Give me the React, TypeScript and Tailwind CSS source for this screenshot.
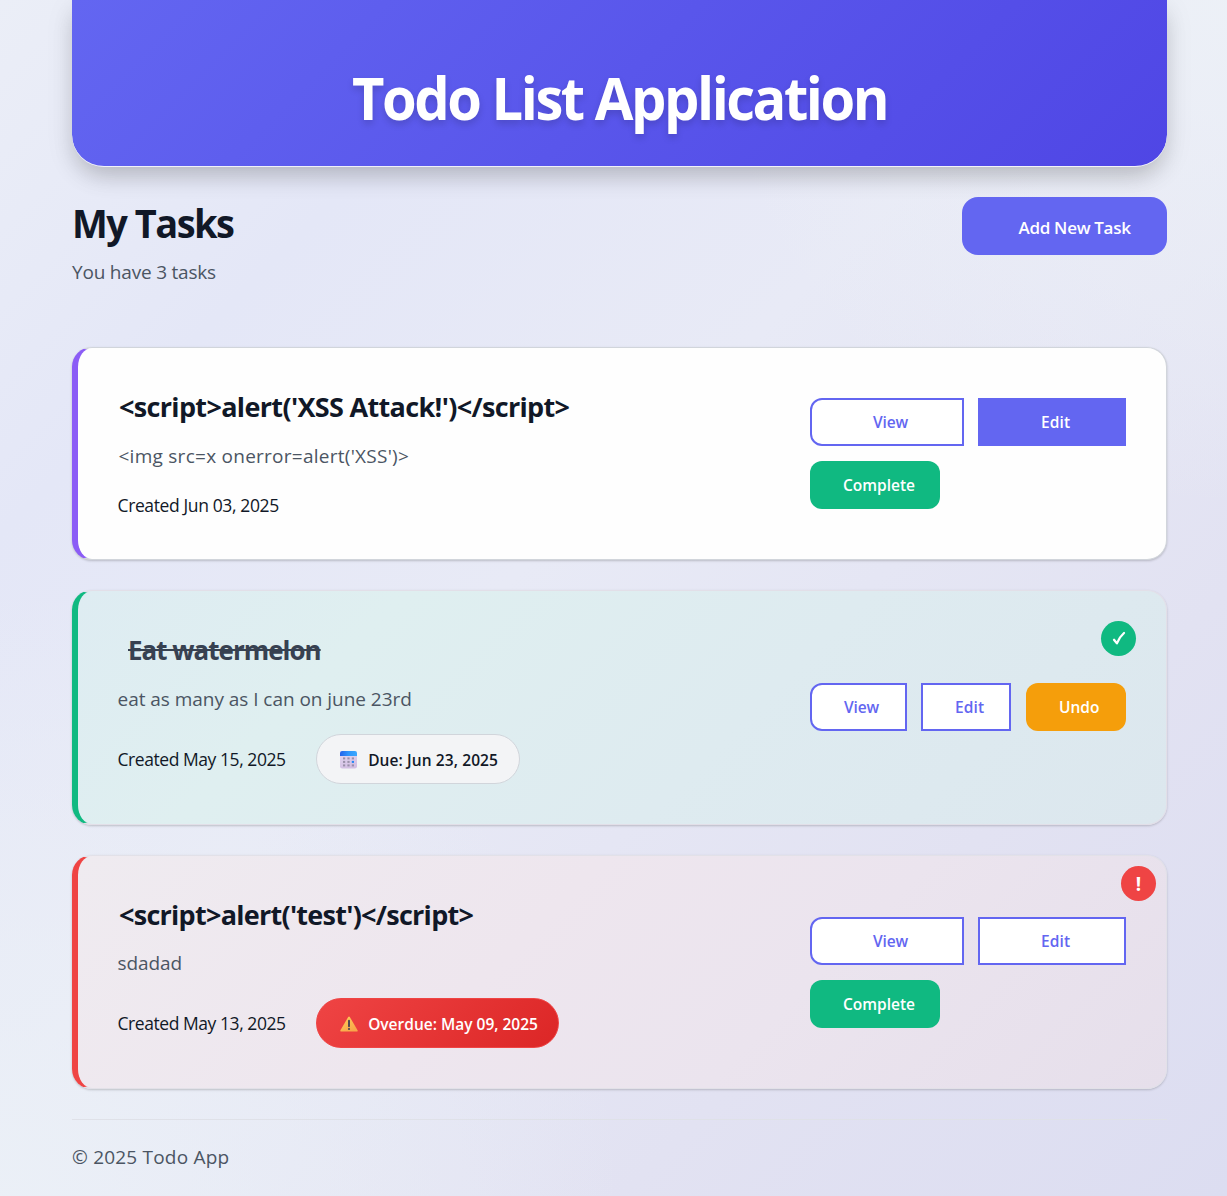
import type { ReactNode } from 'react';

function CalendarIcon() {
  return (
    <svg viewBox="0 0 17 18" className="mt-px h-[18px] w-[17px] shrink-0" aria-hidden="true">
      <defs>
        <linearGradient id="calTop" x1="0" y1="0" x2="1" y2="0">
          <stop offset="0" stopColor="#2563eb" />
          <stop offset="0.5" stopColor="#2f95fb" />
          <stop offset="1" stopColor="#38a8ff" />
        </linearGradient>
        <linearGradient id="calBody" x1="0" y1="0" x2="0.3" y2="1">
          <stop offset="0" stopColor="#e6dcf3" />
          <stop offset="1" stopColor="#d3bfe3" />
        </linearGradient>
      </defs>
      <rect x="0" y="0" width="17" height="17.5" rx="2.2" fill="url(#calBody)" />
      <path d="M0 5V2.2A2.2 2.2 0 0 1 2.2 0h12.6A2.2 2.2 0 0 1 17 2.2V5z" fill="url(#calTop)" />
      <g fill="#9a90aa">
        <rect x="3" y="6.4" width="2.2" height="2" />
        <rect x="7.4" y="6.4" width="2.2" height="2" />
        <rect x="11.8" y="6.4" width="2.2" height="2" />
        <rect x="3" y="9.9" width="2.2" height="2" />
        <rect x="7.4" y="9.9" width="2.2" height="2" />
        <rect x="3" y="13.4" width="2.2" height="2" />
        <rect x="7.4" y="13.4" width="2.2" height="2" />
        <rect x="11.8" y="13.4" width="2.2" height="2" />
      </g>
      <rect x="11.8" y="9.9" width="2.2" height="2" fill="#2288f5" />
    </svg>
  );
}

function WarningIcon() {
  return (
    <svg viewBox="0 0 18 16" className="mt-0.5 h-4 w-[18px] shrink-0" aria-hidden="true">
      <defs>
        <linearGradient id="warn" x1="0" y1="0" x2="0.6" y2="1">
          <stop offset="0" stopColor="#ffd05a" />
          <stop offset="1" stopColor="#f9a64a" />
        </linearGradient>
      </defs>
      <path d="M8.2.9Q9 0 9.8.9L17.7 14.6Q18 15.5 17 15.5H1Q0 15.5.3 14.6z" fill="url(#warn)" />
      <path d="M9 4.8v5.4" stroke="#4a4453" strokeWidth="1.9" strokeLinecap="round" />
      <circle cx="9" cy="13" r="1.1" fill="#4a4453" />
    </svg>
  );
}

function CheckIcon() {
  return (
    <svg viewBox="0 0 14 15" className="h-[15px] w-[14px]" fill="none" aria-hidden="true">
      <path d="M2 8.8 4.9 12.4Q7.4 6 12 2" stroke="#fff" strokeWidth="2.3" strokeLinecap="round" strokeLinejoin="round" />
    </svg>
  );
}

const btn = 'flex h-12 items-center text-[15.5px] font-semibold leading-none whitespace-nowrap';
const outline = 'border-2 border-[#6366f1] bg-white text-[#6366f1]';

function WideActions({ editFilled, nudge }: { editFilled?: boolean; nudge: string }) {
  return (
    <div className="grid w-[316px] grid-cols-[154px_148px] gap-x-3.5 gap-y-[15px]">
      <button className={`${btn} ${nudge} ${outline} rounded-l-xl pl-[61px] tracking-[-0.13px]`}>View</button>
      <button
        className={`${btn} ${nudge} ${editFilled ? 'border-2 border-[#6366f1] bg-[#6366f1] text-white' : outline} pl-[61px] tracking-[0.1px]`}
      >
        Edit
      </button>
      <button className={`${btn} ${nudge} w-[130px] rounded-xl bg-[#10b981] pl-[33px] text-white`}>Complete</button>
    </div>
  );
}

type CardProps = {
  look: string;
  title: ReactNode;
  titleClass: string;
  desc: string;
  descClass: string;
  created: string;
  createdClass: string;
  pill?: ReactNode;
  badge?: ReactNode;
  actions: ReactNode;
};

function TaskCard(p: CardProps) {
  return (
    <article
      className={`relative flex items-center justify-between rounded-[20px] border border-l-[6px] px-10 py-10 shadow-[0_1px_3px_rgba(0,0,0,0.1),0_1px_2px_rgba(0,0,0,0.1)] ${p.look}`}
    >
      <div className="-ml-[0.5px]">
        <h2 className={`text-[27px] font-bold whitespace-nowrap ${p.titleClass}`}>{p.title}</h2>
        <p className={`mt-[15px] text-[19px] leading-[30px] text-[#4b5563] whitespace-nowrap ${p.descClass}`}>{p.desc}</p>
        <div className="mt-5 flex items-center">
          <span className={`text-[17.5px] leading-7 whitespace-nowrap ${p.createdClass}`}>{p.created}</span>
          {p.pill}
        </div>
      </div>
      {p.actions}
      {p.badge}
    </article>
  );
}

export default function App() {
  return (
    <div className="h-[1196px] overflow-hidden bg-[radial-gradient(ellipse_at_100%_0%,rgba(237,241,247,0.9)_0%,rgba(237,241,247,0)_30%),radial-gradient(ellipse_at_0%_100%,rgba(235,240,247,0.95)_0%,rgba(235,240,247,0)_36%),linear-gradient(135deg,#ebeef7_0%,#e4e7f7_22%,#e8eaf6_45%,#e2e2f2_75%,#dcddf1_100%)] pr-[60px] pl-[72px] font-['Open_Sans','Noto_Sans',sans-serif] text-[#111827]">
      <header className="flex h-[167px] justify-center rounded-b-[32px] border-b border-white/40 bg-[linear-gradient(135deg,#6366f1_0%,#4f46e5_100%)] bg-clip-padding pt-[58px] shadow-[0_8px_30px_rgba(0,0,0,0.08),0_12px_22px_-4px_rgba(0,0,0,0.17)]">
        <h1 className="scale-x-[0.95] text-[59px] font-bold leading-[79px] tracking-[-2.6px] whitespace-nowrap text-white [text-shadow:0_4px_8px_rgba(0,0,0,0.15)]">
          Todo List Application
        </h1>
      </header>

      <main>
        <div className="mt-[30px] flex h-[150px] items-start justify-between">
          <div>
            <h2 className="origin-left scale-x-[0.95] text-[40px] font-bold leading-[51px] tracking-[-1.6px] whitespace-nowrap">
              My Tasks
            </h2>
            <p className="mt-[9px] text-[19px] leading-[30px] tracking-[-0.2px] text-[#4b5563]">You have 3 tasks</p>
          </div>
          <button className="flex h-[58px] w-[205px] items-center rounded-2xl bg-[#6366f1] pl-[56.5px] pt-[3px] text-[17px] font-semibold leading-none tracking-[-0.3px] whitespace-nowrap text-white">
            Add New Task
          </button>
        </div>

        <div className="flex flex-col gap-[30px]">
          <TaskCard
            look="border-[#d1d5db] border-l-[#8b5cf6] bg-[#fefefe]"
            title="<script>alert('XSS Attack!')</script>"
            titleClass="pl-[1.5px] leading-[38px] tracking-[-0.66px]"
            desc="<img src=x onerror=alert('XSS')>"
            descClass="pl-px tracking-[0.26px]"
            created="Created Jun 03, 2025"
            createdClass="tracking-[-0.38px]"
            actions={<WideActions editFilled nudge="pt-px" />}
          />
          <TaskCard
            look="border-[#e2dfe8] border-l-[#10b981] bg-[linear-gradient(135deg,#deecf2_0%,#dfeff0_25%,#deebf0_60%,#dce7ee_100%)]"
            title={
              <span className="inline-block origin-left scale-x-[0.96] line-through decoration-[2px]">Eat watermelon</span>
            }
            titleClass="pl-[10px] leading-[38px] tracking-[-1px] text-[#374151]"
            desc="eat as many as I can on june 23rd"
            descClass="tracking-[-0.04px]"
            created="Created May 15, 2025"
            createdClass="tracking-[-0.44px]"
            pill={
              <span className="ml-[30.5px] flex h-[50px] w-[204px] items-center rounded-full border border-[#d1d5db] bg-[#f3f4f6] pl-[23px] text-[15.5px] font-semibold tracking-[0.1px] whitespace-nowrap">
                <CalendarIcon />
                <span className="mt-1 pl-[11px]">Due: Jun 23, 2025</span>
              </span>
            }
            actions={
              <div className="mb-px flex">
                <button className={`${btn} ${outline} w-[97px] rounded-l-xl pt-0.5 pl-8 tracking-[-0.13px]`}>View</button>
                <button className={`${btn} ${outline} ml-3.5 w-[90px] pt-0.5 pl-8 tracking-[0.1px]`}>Edit</button>
                <button className={`${btn} ml-[15px] w-[100px] rounded-xl bg-[#f59e0b] pt-0.5 pl-[33px] text-white`}>Undo</button>
              </div>
            }
            badge={
              <span className="absolute top-[30px] right-[30px] flex size-[35px] items-center justify-center rounded-full bg-[#10b981]">
                <CheckIcon />
              </span>
            }
          />
          <TaskCard
            look="border-[#e2e1e8] border-l-[#ef4444] bg-[linear-gradient(135deg,#efebf0_0%,#eee6ee_40%,#ebe4ee_65%,#e6dfeb_100%)]"
            title="<script>alert('test')</script>"
            titleClass="pl-[1.5px] leading-[37px] tracking-[-0.73px]"
            desc="sdadad"
            descClass="tracking-[-0.1px]"
            created="Created May 13, 2025"
            createdClass="tracking-[-0.44px]"
            pill={
              <span className="ml-[30.5px] flex h-[50px] w-[243px] items-center rounded-full border border-[#ef4444] bg-[linear-gradient(135deg,#ef4444_0%,#dc2626_100%)] pl-[23px] text-[15.5px] font-semibold whitespace-nowrap text-white">
                <WarningIcon />
                <span className="mt-1 pl-2.5">Overdue: May 09, 2025</span>
              </span>
            }
            actions={<WideActions nudge="pt-[3px]" />}
            badge={
              <span className="absolute top-[10px] right-[10px] flex size-[35px] items-center justify-center rounded-full bg-[#ef4444] pt-px text-[19px] font-bold leading-none text-white">
                !
              </span>
            }
          />
        </div>
      </main>

      <footer className="mt-[30px] border-t border-[#dfe1e8] pt-[21px] text-[19px] leading-[32px] tracking-[0.2px] text-[#4b5563]">
        © 2025 Todo App
      </footer>
    </div>
  );
}
